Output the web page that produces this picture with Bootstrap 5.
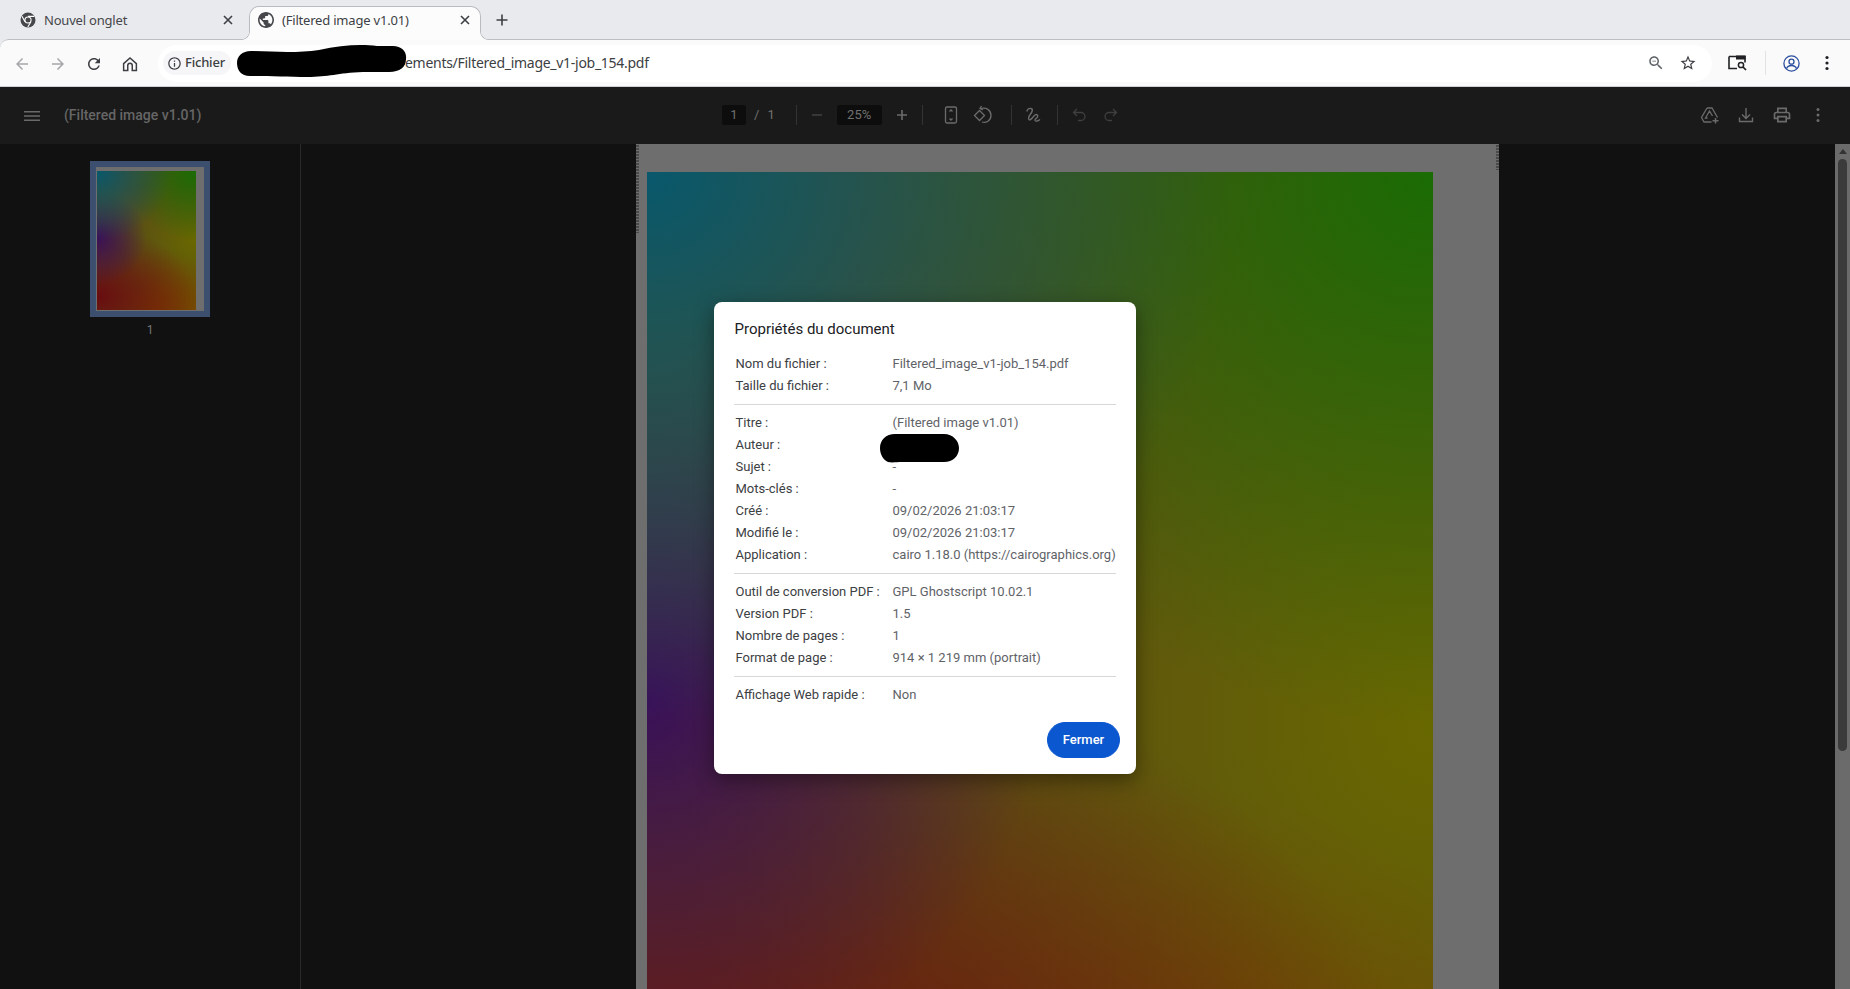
<!DOCTYPE html>
<html lang="fr">
<head>
  <meta charset="UTF-8">
  <meta name="viewport" content="width=device-width, initial-scale=1">
  <title>(Filtered image v1.01)</title>
  <link href="https://cdn.jsdelivr.net/npm/bootstrap@5.3.3/dist/css/bootstrap.min.css" rel="stylesheet">
  <style>
    html, body { height: 989px; overflow: hidden; }
    body { font-family: Roboto, "Liberation Sans", sans-serif; background: #e9eaee; }

    /* browser chrome */
    .tab-strip { height: 40px; background: #e9eaee; padding-left: 8px; flex: none; }
    .tab-item { width: 234px; height: 34px; margin-top: 6px; padding: 0 8px 6px 12px; font: 13px "Noto Sans", sans-serif; letter-spacing: -.2px; color: #45474a; }
    .tab-item.tab-active { width: 232px; background: #fcfcfd; border: 1px solid #b9bbc0; border-bottom: 0; border-radius: 10px 10px 0 0; position: relative; z-index: 2; height: 34px; margin-left: 7px; padding: 0 9px 8px 8px; color: #3c3f43; }
    .tab-item.tab-active::before, .tab-item.tab-active::after { content: ""; position: absolute; bottom: 0; width: 9px; height: 9px; }
    .tab-item.tab-active::before { left: -9px; background: radial-gradient(circle at 0 0, transparent 8px, #b9bbc0 8.5px, #fcfcfd 9.5px); }
    .tab-item.tab-active::after { right: -9px; background: radial-gradient(circle at 100% 0, transparent 8px, #b9bbc0 8.5px, #fcfcfd 9.5px); }
    .tab-name { margin-left: 8px; }
    .tab-plus { width: 28px; height: 28px; margin-left: 7px; margin-top: 6px; }

    .addr-toolbar { height: 48px; background: #fafafb; border-top: 1px solid #bcbec3; border-bottom: 1px solid #d0d1d4; border-top-left-radius: 9px; margin-top: -1px; flex: none; position: relative; z-index: 1; }
    .nav-btn { width: 36px; flex: none; }
    .nav-icons { padding-left: 4px; }
    .addr-pill { width: 1554px; height: 37px; margin-left: 10px; background: #fff; border-radius: 19px; padding: 0 15px 0 5px; position: relative; }
    .site-chip { height: 24px; width: 68px; background: #f6f6f8; border-radius: 12px; padding-left: 4px; font: 500 13px "Noto Sans", sans-serif; letter-spacing: -.2px; color: #3c3f43; gap: 3px; }
    .site-chip span { margin-bottom: 2px; }
    .addr-url { margin: 0 0 2px 174px; font: 14px "Noto Sans", sans-serif; color: #3c4043; letter-spacing: -.02em; }
    .black-out { position: absolute; fill: #000; }
    .url-blob { left: 79px; top: -1px; }
    .pill-icons { gap: 14px; }
    .tool-right { margin-left: 16px; }
    .tool-sep { width: 1px; height: 24px; background: #e3e3e6; margin: 0 17px; }
    .menu-dots { margin-left: 25px; }

    /* pdf viewer, colours are already dimmed by the dialog backdrop */
    .viewer { position: relative; flex: 1 1 auto; min-height: 0; background: #111; }
    .pdf-bar { height: 57px; background: #1a1a1a; color: #6b6b6b; flex: none; position: relative; }
    .bar-left { width: 300px; padding-left: 20px; }
    .doc-title { margin-left: 20px; font-weight: 500; font-size: 14px; color: #666; }
    .bar-center { position: absolute; left: 722px; top: 0; height: 56px; font-size: 13px; color: #707070; }
    .bar-right { position: absolute; left: 1700px; top: 0; height: 56px; }
    .page-box { background: #0d0d0d; height: 20px; border-radius: 2px; }
    .page-num { width: 24px; }
    .zoom-val { width: 45px; }
    .page-total { margin-right: 21px; }
    .bar-sep { width: 1px; height: 20px; background: #333; }
    .dim-icon { color: #6b6b6b; }
    .off-icon { color: #3f3f3f; }
    .mx-10 { margin: 0 10px; }
    .fit-icon { margin: 0 6px 0 18px; }
    .rotate-icon { margin: 0 18px 0 6px; }
    .draw-icon { margin: 0 13px 0 12px; }
    .undo-icon { margin: 0 12px 0 11px; }

    .thumb-pane { width: 301px; border-right: 1px solid #2a2a2a; padding: 17px 0 0 90px; flex: none; background: #111; }
    .thumb-frame { width: 120px; height: 156px; background: #6e6e6e; border: 6px solid #3d4f6e; padding: 4px 8px 1px 1px; }
    .thumb-img { width: 100%; height: 100%; }
    .thumb-num { width: 120px; margin-top: 4px; font-size: 12px; color: #777; text-align: center; }

    .page-pane { min-width: 0; flex: 1 1 auto; padding-right: 1px; }
    .pdf-page { width: 863px; height: 1200px; background: #6e6e6e; padding: 28px 66px 0 11px; position: relative; flex: none; }
    .pdf-img { width: 786px; height: 1106px; }
    .gradient-img {
      background:
        radial-gradient(ellipse 75% 50% at 0 0, #08586c, rgba(8,88,108,0)),
        radial-gradient(ellipse 75% 50% at 100% 0, #1a6c04, rgba(26,108,4,0)),
        radial-gradient(ellipse 50% 34% at 0 48%, #3a1058, rgba(58,16,88,0)),
        radial-gradient(ellipse 100% 50% at 0 90%, #6a0c10, rgba(106,12,16,0)),
        radial-gradient(ellipse 65% 45% at 62% 100%, #7a3c00, rgba(122,60,0,0)),
        radial-gradient(ellipse 75% 55% at 100% 50%, #686800, rgba(104,104,0,0)),
        radial-gradient(ellipse 60% 40% at 100% 100%, #745000, rgba(116,80,0,0)),
        #584a18;
    }
    .edge-mark { position: absolute; top: 1px; width: 3px; background: repeating-linear-gradient(#4a4a4a 0 2px, #6e6e6e 2px 3px); }
    .edge-left { left: 0; height: 88px; }
    .edge-right { right: 0; height: 25px; }
    .scroll-rail { width: 15px; background: #6b6b6b; flex: none; position: relative; }
    .scroll-arrow { width: 0; height: 0; border: 4.5px solid transparent; border-bottom: 5px solid #333; border-top: 0; margin: 5px auto 5px; }
    .scroll-knob { width: 9px; height: 592px; background: #3b3b3b; border-radius: 5px; margin: 0 auto; }

    /* properties dialog */
    .prop-layer { position: absolute; inset: 0; z-index: 5; }
    .prop-dialog { width: 422px; height: 472px; border: 0; border-radius: 8px; padding: 0 20px; background: #fff; box-shadow: 0 6px 20px rgba(0,0,0,.4); font-size: 13px; }
    .prop-title { font-size: 15px; color: #202124; margin: 17px 0 14px; line-height: 20px; padding-left: .5px; }
    .prop-row { height: 22px; line-height: 22px; padding-left: 1.5px; position: relative; }
    .prop-label { width: 157px; color: #3c4043; flex: none; }
    .prop-value { color: #5f6368; white-space: nowrap; }
    .prop-rule { margin: 7px 0; border: 0; height: 1px; background: #d6d8da; opacity: 1; }
    .author-blob { left: 146px; top: 0; }
    .prop-close { position: absolute; right: 16px; bottom: 16px; width: 73px; height: 36px; padding: 0; border-radius: 18px; background: #0b57d0; border-color: #0b57d0; font-size: 13px; font-weight: 500; }
  </style>
</head>
<body class="d-flex flex-column">

  <!-- tabs -->
  <div class="tab-strip d-flex">
    <div class="tab-item d-flex align-items-center">
      <svg width="16" height="16" viewBox="0 0 16 16"><circle cx="8" cy="8" r="7.5" fill="#45474a"/><circle cx="8" cy="8" r="3.6" fill="#fff"/><circle cx="8" cy="8" r="2.5" fill="#45474a"/><path d="M8 4.4h6.2M5 9.8 2 4.3M10.9 9.8 7.8 15" stroke="#fff" stroke-width="1.1"/></svg>
      <span class="tab-name flex-grow-1">Nouvel onglet</span>
      <svg width="12" height="12" viewBox="0 0 12 12"><path d="M2 2l8 8M10 2l-8 8" stroke="#3c3f43" stroke-width="1.6"/></svg>
    </div>
    <div class="tab-item tab-active d-flex align-items-center">
      <svg width="16" height="16" viewBox="2 2 20 20" fill="#45474a"><path d="M12 2C6.48 2 2 6.48 2 12s4.48 10 10 10 10-4.48 10-10S17.52 2 12 2zm-1 17.93c-3.95-.49-7-3.85-7-7.93 0-.62.08-1.21.21-1.79L9 15v1c0 1.1.9 2 2 2v1.93zm6.9-2.54c-.26-.81-1-1.39-1.9-1.39h-1v-3c0-.55-.45-1-1-1H8v-2h2c.55 0 1-.45 1-1V7h2c1.1 0 2-.9 2-2v-.41c2.93 1.19 5 4.06 5 7.41 0 2.08-.8 3.97-2.1 5.39z"/></svg>
      <span class="tab-name flex-grow-1">(Filtered image v1.01)</span>
      <svg width="12" height="12" viewBox="0 0 12 12"><path d="M2 2l8 8M10 2l-8 8" stroke="#3c3f43" stroke-width="1.6"/></svg>
    </div>
    <div class="tab-plus d-flex align-items-center justify-content-center">
      <svg width="12" height="12" viewBox="0 0 12 12"><path d="M6 .5v11M.5 6h11" stroke="#3c3f43" stroke-width="1.6"/></svg>
    </div>
  </div>

  <!-- address bar -->
  <div class="addr-toolbar d-flex align-items-center">
    <div class="nav-icons d-flex align-items-center">
      <div class="nav-btn text-center"><svg width="18" height="18" viewBox="0 0 24 24" fill="#a5a7ab"><path d="M20 11H7.83l5.59-5.59L12 4l-8 8 8 8 1.41-1.41L7.83 13H20v-2z"/></svg></div>
      <div class="nav-btn text-center"><svg width="18" height="18" viewBox="0 0 24 24" fill="#a5a7ab"><path d="M12 4l-1.41 1.41L16.17 11H4v2h12.17l-5.58 5.59L12 20l8-8z"/></svg></div>
      <div class="nav-btn text-center"><svg width="18" height="18" viewBox="0 0 24 24" fill="#3c3f43"><path d="M17.65 6.35C16.2 4.9 14.21 4 12 4c-4.42 0-7.99 3.58-7.99 8s3.57 8 7.99 8c3.73 0 6.84-2.55 7.73-6h-2.08c-.82 2.33-3.04 4-5.65 4-3.31 0-6-2.69-6-6s2.69-6 6-6c1.66 0 3.14.69 4.22 1.78L13 11h7V4l-2.35 2.35z"/></svg></div>
      <div class="nav-btn text-center"><svg width="18" height="18" viewBox="0 0 24 24" fill="none" stroke="#3c3f43" stroke-width="2"><path d="M3.5 11.5 12 4l8.500 7.500V20.500H15V14a3 3 0 0 0-6 0v6.500H3.500z"/></svg></div>
    </div>
    <div class="addr-pill d-flex align-items-center">
      <div class="site-chip d-flex align-items-center">
        <svg width="15" height="15" viewBox="0 0 24 24" fill="#3c3f43"><path d="M11 7h2v2h-2zm0 4h2v6h-2zm1-9C6.48 2 2 6.48 2 12s4.48 10 10 10 10-4.48 10-10S17.52 2 12 2zm0 18c-4.410 0-8-3.590-8-8s3.590-8 8-8 8 3.590 8 8-3.590 8-8 8z"/></svg>
        <span>Fichier</span>
      </div>
      <span class="addr-url">ements/Filtered_image_v1-job_154.pdf</span>
      <svg class="black-out url-blob" width="170" height="34" viewBox="0 0 170 34"><path d="M14 7C40 8 62 9 82 6 104 1 124 0 140 2L156 2C165 2 170 8 169 15 169 23 163 28 152 28L126 28C100 29 92 33 70 33 52 33 30 32 13 32 4 32 0 26 0 19 0 12 5 7 14 7z"/></svg>
      <div class="pill-icons ms-auto d-flex align-items-center">
        <svg width="18" height="18" viewBox="0 0 24 24" fill="#5f6368"><path d="M15.500 14h-.79l-.28-.27C15.410 12.590 16 11.110 16 9.500 16 5.910 13.090 3 9.500 3S3 5.910 3 9.500 5.910 16 9.500 16c1.610 0 3.090-.59 4.230-1.570l.27.28v.79l5 4.990L20.490 19l-4.990-5zm-6 0C7.010 14 5 11.990 5 9.500S7.010 5 9.500 5 14 7.010 14 9.500 11.990 14 9.500 14zM7 9h5v1H7z"/></svg>
        <svg width="18" height="18" viewBox="0 0 24 24" fill="#3c3f43"><path d="M22 9.240l-7.190-.62L12 2 9.190 8.630 2 9.240l5.460 4.730L5.820 21 12 17.270 18.180 21l-1.630-7.030L22 9.240zM12 15.400l-3.760 2.270 1-4.280-3.320-2.880 4.380-.38L12 6.100l1.710 4.040 4.380.38-3.320 2.880 1 4.280L12 15.400z"/></svg>
      </div>
    </div>
    <div class="tool-right d-flex align-items-center">
      <svg width="20" height="18" viewBox="0 0 20 18"><path d="M1 2.500h16v6M1 2.500v12h8" fill="none" stroke="#202124" stroke-width="1.600"/><rect x="8" y="1.500" width="9.500" height="4" fill="#202124"/><circle cx="13" cy="11" r="2.600" fill="none" stroke="#202124" stroke-width="1.500"/><path d="M15 13l3 3" stroke="#202124" stroke-width="1.700"/></svg>
      <div class="tool-sep"></div>
      <svg width="17" height="17" viewBox="0 0 17 17" fill="none" stroke="#2b4f9e" stroke-width="1.300"><circle cx="8.500" cy="8.500" r="7.600"/><circle cx="8.500" cy="6.700" r="2.500"/><path d="M3.400 13.700c1-2.400 3-3.200 5.100-3.200s4.100.8 5.100 3.200"/></svg>
      <svg class="menu-dots" width="4" height="16" viewBox="0 0 4 16" fill="#202124"><circle cx="2" cy="2.500" r="1.600"/><circle cx="2" cy="8" r="1.600"/><circle cx="2" cy="13.500" r="1.600"/></svg>
    </div>
  </div>

  <div class="viewer d-flex flex-column">
    <!-- pdf toolbar -->
    <div class="pdf-bar d-flex align-items-center">
      <div class="bar-left d-flex align-items-center">
        <svg class="dim-icon" width="24" height="24" viewBox="0 0 24 24" fill="currentColor"><path d="M4 17h16v-1.500H4V17zm0-4.300h16v-1.500H4v1.500zM4 7v1.500h16V7H4z"/></svg>
        <span class="doc-title">(Filtered image v1.01)</span>
      </div>
      <div class="bar-center d-flex align-items-center">
        <div class="page-box page-num text-center">1</div>
        <span class="ms-2">/</span>
        <span class="ms-2 page-total">1</span>
        <div class="bar-sep"></div>
        <svg class="off-icon mx-10" width="20" height="20" viewBox="0 0 20 20" fill="currentColor"><rect x="5" y="9.200" width="10" height="1.600"/></svg>
        <div class="page-box zoom-val text-center">25%</div>
        <svg class="dim-icon mx-10" width="20" height="20" viewBox="0 0 20 20" fill="currentColor"><path d="M5 9.200h4.200V5h1.600v4.200H15v1.600h-4.200V15H9.200v-4.200H5z"/></svg>
        <div class="bar-sep"></div>
        <svg class="dim-icon fit-icon" width="20" height="20" viewBox="0 0 20 20" fill="none" stroke="currentColor" stroke-width="1.300"><rect x="4.500" y="2" width="11" height="16" rx="1.500"/><path d="M8.500 6.500 10 5l1.500 1.500M8.500 13.500 10 15l1.500-1.500"/></svg>
        <svg class="dim-icon rotate-icon" width="20" height="20" viewBox="0 0 20 20" fill="none" stroke="currentColor" stroke-width="1.300"><path d="M1.500 10.500 6.500 5.500l5 5-5 5z"/><path d="M8 3.500c5-1.500 10 1.500 10 7 0 5-5 8-9 6.500M8.500 1l-1.500 2.500 3 1.500"/></svg>
        <div class="bar-sep"></div>
        <svg class="dim-icon draw-icon" width="20" height="20" viewBox="0 0 20 20" fill="none" stroke="currentColor" stroke-width="1.400"><path d="M3 6.500c0-2 2-3.500 4-3 2.500.6 1 3.500-.5 5.500S4 13 5 14.500c1.500 1.700 4-3 6-4.500 1.500-1 3.500 0 2.500 2-.7 1.400-3 2-2.500 3.500.5 1.300 3.500.5 5-1"/></svg>
        <div class="bar-sep"></div>
        <svg class="off-icon undo-icon" width="20" height="20" viewBox="0 0 20 20" fill="none" stroke="currentColor" stroke-width="1.300"><path d="M8 4 4.500 7.500 8 11M4.500 7.500h7.500a4 4 0 0 1 0 8H9"/></svg>
        <svg class="off-icon" width="20" height="20" viewBox="0 0 20 20" fill="none" stroke="currentColor" stroke-width="1.300"><path d="M12 4l3.500 3.500L12 11M15.500 7.500H8a4 4 0 0 0 0 8h3"/></svg>
      </div>
      <div class="bar-right d-flex align-items-center gap-3">
        <svg class="dim-icon" width="20" height="20" viewBox="0 0 20 20" fill="none" stroke="currentColor" stroke-width="1.300"><path d="M7 3h5l5.500 9.500M7 3 1.500 12.500 4 17h7.500M7.500 13H5.500L9.500 6l3 5"/><path d="M15.500 13v5.500M12.500 15.700h6" stroke-width="1.500"/></svg>
        <svg class="dim-icon" width="20" height="20" viewBox="0 0 20 20" fill="none" stroke="currentColor" stroke-width="1.400"><path d="M10 3v10M6 9.500l4 4 4-4M3.500 12.500V16.500h13v-4"/></svg>
        <svg class="dim-icon" width="20" height="20" viewBox="0 0 24 24" fill="currentColor"><path d="M19 8h-1V3H6v5H5c-1.660 0-3 1.340-3 3v6h4v4h12v-4h4v-6c0-1.660-1.340-3-3-3zM8 5h8v3H8V5zm8 12v2H8v-4h8v2zm2-2v-2H6v2H4v-4c0-.55.45-1 1-1h14c.55 0 1 .45 1 1v4h-2z"/></svg>
        <svg class="dim-icon" width="20" height="20" viewBox="0 0 20 20" fill="currentColor"><circle cx="10" cy="4.500" r="1.500"/><circle cx="10" cy="10" r="1.500"/><circle cx="10" cy="15.500" r="1.500"/></svg>
      </div>
    </div>

    <div class="d-flex flex-grow-1 overflow-hidden">
      <div class="thumb-pane">
        <div class="thumb-frame"><div class="thumb-img gradient-img"></div></div>
        <div class="thumb-num">1</div>
      </div>
      <div class="page-pane d-flex justify-content-center overflow-hidden">
        <div class="pdf-page">
          <div class="edge-mark edge-left"></div>
          <div class="edge-mark edge-right"></div>
          <div class="pdf-img gradient-img"></div>
        </div>
      </div>
      <div class="scroll-rail">
        <div class="scroll-arrow"></div>
        <div class="scroll-knob"></div>
      </div>
    </div>

    <!-- document properties -->
    <div class="prop-layer d-flex align-items-center justify-content-center">
      <div class="modal-content prop-dialog">
        <div class="prop-title">Propriétés du document</div>
        <div class="prop-row d-flex"><div class="prop-label">Nom du fichier :</div><div class="prop-value">Filtered_image_v1-job_154.pdf</div></div>
        <div class="prop-row d-flex"><div class="prop-label">Taille du fichier :</div><div class="prop-value">7,1 Mo</div></div>
        <hr class="prop-rule">
        <div class="prop-row d-flex"><div class="prop-label">Titre :</div><div class="prop-value">(Filtered image v1.01)</div></div>
        <div class="prop-row d-flex"><div class="prop-label">Auteur :</div><div class="prop-value"></div>
          <svg class="black-out author-blob" width="79" height="29" viewBox="0 0 79 29"><path d="M15 0H64C73 0 79 7 79 14 79 22 73 28 64 28H22C16 28 12 29 8 28 3 26 0 20 0 14 0 6 6 0 15 0z"/></svg>
        </div>
        <div class="prop-row d-flex"><div class="prop-label">Sujet :</div><div class="prop-value">-</div></div>
        <div class="prop-row d-flex"><div class="prop-label">Mots-clés :</div><div class="prop-value">-</div></div>
        <div class="prop-row d-flex"><div class="prop-label">Créé :</div><div class="prop-value">09/02/2026 21:03:17</div></div>
        <div class="prop-row d-flex"><div class="prop-label">Modifié le :</div><div class="prop-value">09/02/2026 21:03:17</div></div>
        <div class="prop-row d-flex"><div class="prop-label">Application :</div><div class="prop-value">cairo 1.18.0 (https://cairographics.org)</div></div>
        <hr class="prop-rule">
        <div class="prop-row d-flex"><div class="prop-label">Outil de conversion PDF :</div><div class="prop-value">GPL Ghostscript 10.02.1</div></div>
        <div class="prop-row d-flex"><div class="prop-label">Version PDF :</div><div class="prop-value">1.5</div></div>
        <div class="prop-row d-flex"><div class="prop-label">Nombre de pages :</div><div class="prop-value">1</div></div>
        <div class="prop-row d-flex"><div class="prop-label">Format de page :</div><div class="prop-value">914 × 1 219 mm (portrait)</div></div>
        <hr class="prop-rule">
        <div class="prop-row d-flex"><div class="prop-label">Affichage Web rapide :</div><div class="prop-value">Non</div></div>
        <button type="button" class="btn btn-primary prop-close">Fermer</button>
      </div>
    </div>
  </div>

  <script src="https://cdn.jsdelivr.net/npm/bootstrap@5.3.3/dist/js/bootstrap.bundle.min.js"></script>
</body>
</html>
